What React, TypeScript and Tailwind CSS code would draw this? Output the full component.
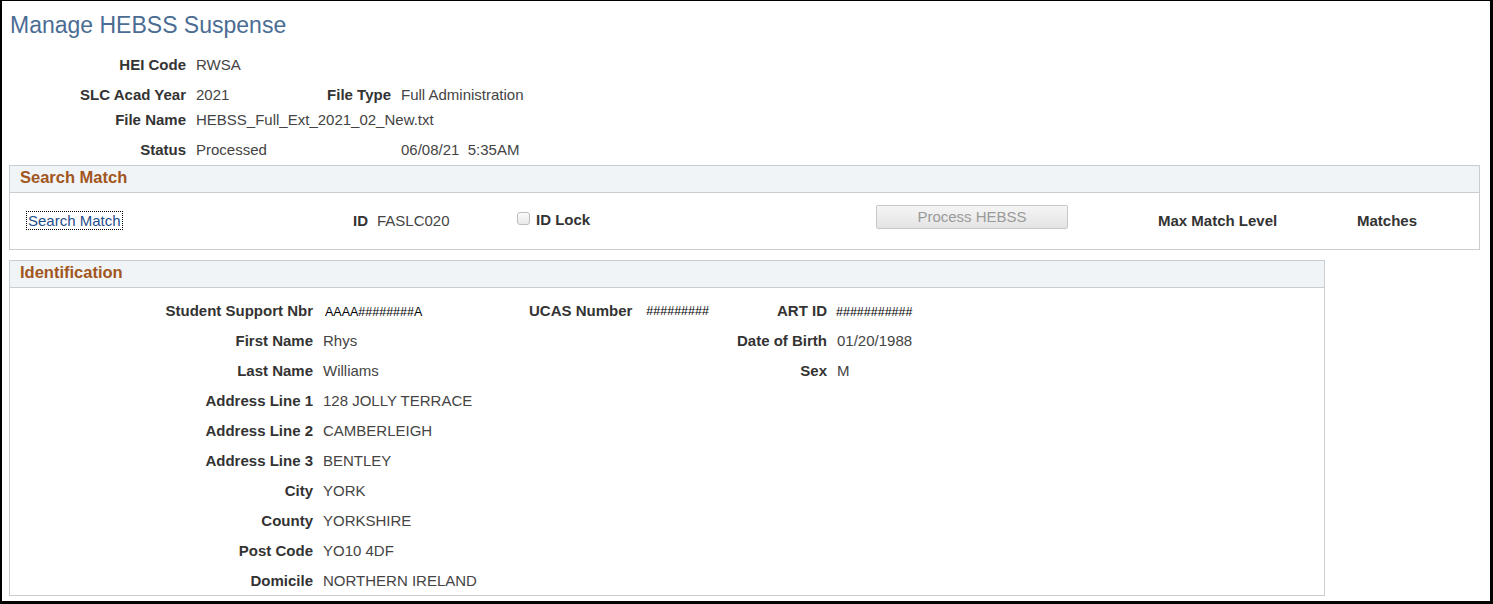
import React from 'react';

/* ============================================================
   Manage HEBSS Suspense — header fields, search and identification
   ============================================================ */

const font = { fontFamily: '"Liberation Sans", Arial, sans-serif' };

function Label({ children, className = '' }: { children: React.ReactNode; className?: string }) {
  return <span className={`font-bold text-[15px] leading-[18px] text-[#333333] ${className}`}>{children}</span>;
}

function Value({ children, className = '' }: { children: React.ReactNode; className?: string }) {
  return <span className={`text-[15px] leading-[18px] text-[#444444] ${className}`}>{children}</span>;
}

// masked values are drawn smaller and black
function Masked({ children, className = '' }: { children: React.ReactNode; className?: string }) {
  return <span className={`text-[12.5px] leading-[18px] text-black ${className}`}>{children}</span>;
}

function GroupHeader({ title }: { title: string }) {
  return (
    <div className="h-[27px] bg-[#f1f4f6] border-b border-[#c9cdd2] flex items-center pl-[10px] pb-[4px]">
      <span className="font-bold text-[16.5px] leading-[20px] text-[#a1561e]">{title}</span>
    </div>
  );
}

/* ---------- top summary fields ---------- */

function SummaryRow({
  label,
  value,
  midLabel,
  tail,
  className = '',
}: {
  label: string;
  value: string;
  midLabel?: string;
  tail?: React.ReactNode;
  className?: string;
}) {
  return (
    <div className={`flex h-[18px] items-center ${className}`}>
      <div className="w-[184px] text-right">
        <Label>{label}</Label>
      </div>
      <div className="w-[120px] pl-[10px] whitespace-nowrap">
        <Value>{value}</Value>
      </div>
      <div className="w-[85px] text-right">{midLabel && <Label>{midLabel}</Label>}</div>
      {tail && <div className="pl-[10px] whitespace-pre">{tail}</div>}
    </div>
  );
}

/* ---------- search match group ---------- */

function SearchMatch() {
  return (
    <div className="ml-[7px] mt-[6px] w-[1471px] border border-[#c9cdd2]">
      <GroupHeader title="Search Match" />
      <div className="h-[56px] flex items-center">
        <div className="w-[343px] pl-[17px]">
          <a className="text-[15px] leading-[17px] text-[#1f4e8c] outline outline-1 outline-dotted outline-black px-[1px] cursor-pointer">
            Search Match
          </a>
        </div>
        <div className="w-[164px] flex items-center">
          <Label>ID</Label>
          <Value className="ml-[9px]">FASLC020</Value>
        </div>
        <div className="w-[359px] flex items-center">
          <span className="w-[13px] h-[13px] rounded-[3px] border border-[#bdbdbd] bg-gradient-to-b from-[#fafafa] to-[#e9e9e9] mb-[6px]" />
          <Label className="ml-[6px] mb-[2px]">ID Lock</Label>
        </div>
        <button
          disabled
          className="w-[192px] h-[24px] mb-[9px] rounded-[2px] border border-[#c8c8c8] bg-gradient-to-b from-[#f5f5f5] to-[#e4e4e4] text-[15px] leading-[18px] text-[#9a9a9a]"
        >
          Process HEBSS
        </button>
        <div className="w-[199px] ml-[90px]">
          <Label>Max Match Level</Label>
        </div>
        <Label>Matches</Label>
      </div>
    </div>
  );
}

/* ---------- identification group ---------- */

type IdRow = { label: string; value: string; side?: { label: string; value: React.ReactNode } };

const idRows: IdRow[] = [
  { label: 'First Name', value: 'Rhys', side: { label: 'Date of Birth', value: <Value>01/20/1988</Value> } },
  { label: 'Last Name', value: 'Williams', side: { label: 'Sex', value: <Value>M</Value> } },
  { label: 'Address Line 1', value: '128 JOLLY TERRACE' },
  { label: 'Address Line 2', value: 'CAMBERLEIGH' },
  { label: 'Address Line 3', value: 'BENTLEY' },
  { label: 'City', value: 'YORK' },
  { label: 'County', value: 'YORKSHIRE' },
  { label: 'Post Code', value: 'YO10 4DF' },
  { label: 'Domicile', value: 'NORTHERN IRELAND' },
];

function Identification() {
  return (
    <div className="ml-[7px] mt-[10px] w-[1316px] h-[336px] border border-[#c9cdd2]">
      <GroupHeader title="Identification" />
      <div className="pt-[8px]">
        {/* first row carries the reference numbers */}
        <div className="flex h-[30px] items-center">
          <div className="w-[303px] text-right">
            <Label>Student Support Nbr</Label>
          </div>
          <div className="w-[216px] pl-[12px]">
            <Masked>AAAA########A</Masked>
          </div>
          <div className="w-[298px] flex items-center">
            <Label>UCAS Number</Label>
            <Masked className="ml-[14px]">#########</Masked>
            <Label className="ml-auto">ART ID</Label>
          </div>
          <div className="pl-[9px]">
            <Masked>###########</Masked>
          </div>
        </div>

        {idRows.map((row) => (
          <div key={row.label} className="flex h-[30px] items-center">
            <div className="w-[303px] text-right">
              <Label>{row.label}</Label>
            </div>
            <div className="w-[216px] pl-[10px] whitespace-nowrap">
              <Value>{row.value}</Value>
            </div>
            <div className="w-[298px] text-right">{row.side && <Label>{row.side.label}</Label>}</div>
            {row.side && <div className="pl-[10px]">{row.side.value}</div>}
          </div>
        ))}
      </div>
    </div>
  );
}

export default function App() {
  return (
    <div
      style={font}
      className="w-[1493px] h-[604px] bg-white border-t border-l-2 border-r-[3px] border-b-[3px] border-black overflow-hidden"
    >
      <h1 className="pt-[10px] pl-[8px] text-[23px] leading-[28px] font-normal text-[#4b6c93]">
        Manage HEBSS Suspense
      </h1>

      <SummaryRow label="HEI Code" value="RWSA" className="mt-[17px]" />
      <SummaryRow label="SLC Acad Year" value="2021" midLabel="File Type" tail={<Value>Full Administration</Value>} className="mt-[12px]" />
      <div className="flex h-[18px] items-center mt-[7px]">
        <div className="w-[184px] text-right">
          <Label>File Name</Label>
        </div>
        <div className="pl-[10px]">
          <Value>HEBSS_Full_Ext_2021_02_New.txt</Value>
        </div>
      </div>
      <SummaryRow
        label="Status"
        value="Processed"
        tail={<Value>06/08/21  5:35AM</Value>}
        className="mt-[12px]"
      />

      <SearchMatch />
      <Identification />
    </div>
  );
}
